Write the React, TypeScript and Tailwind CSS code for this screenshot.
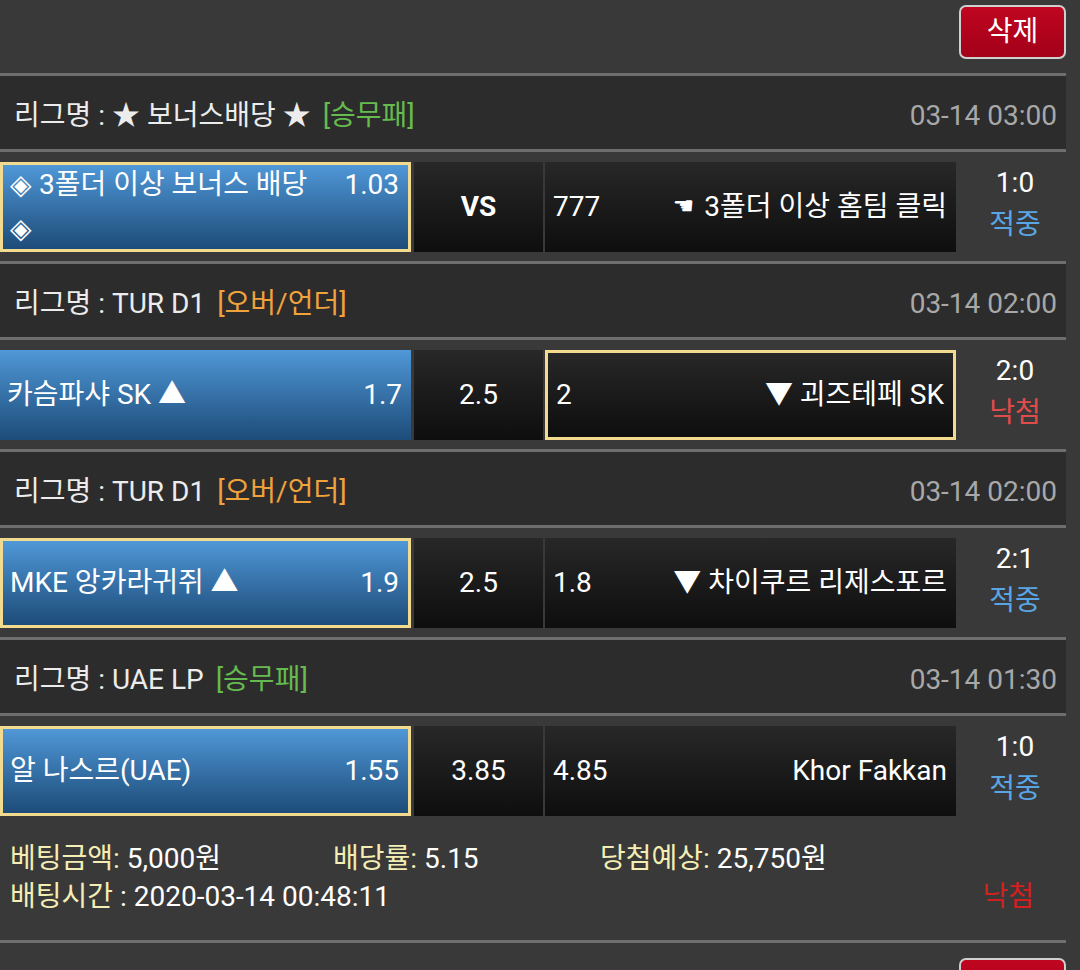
import React from "react";

type Game = {
  league: string
  type: string
  typeColor: string
  time: string
  home: React.ReactNode
  homeOdds: string
  mid: string
  away: React.ReactNode
  awayOdds: string
  pick: 'home' | 'away'
  score: string
  result: string
  resultColor: string
}

const games: Game[] = [
  {
    league: '★ 보너스배당 ★',
    type: '[승무패]',
    typeColor: 'text-[#66bb4e]',
    time: '03-14 03:00',
    home: (<>◈ 3폴더 이상 보너스 배당<br />◈</>),
    homeOdds: '1.03',
    mid: 'VS',
    away: (<><span className="font-['DejaVu_Sans'] text-[24px] align-[2px] mr-[10px]">☚</span>3폴더 이상 홈팀 클릭</>),
    awayOdds: '777',
    pick: 'home',
    score: '1:0',
    result: '적중',
    resultColor: 'text-[#5aa6e4]',
  },
  {
    league: 'TUR D1',
    type: '[오버/언더]',
    typeColor: 'text-[#f0a23c]',
    time: '03-14 02:00',
    home: '카슴파샤 SK ▲',
    homeOdds: '1.7',
    mid: '2.5',
    away: '▼ 괴즈테페 SK',
    awayOdds: '2',
    pick: 'away',
    score: '2:0',
    result: '낙첨',
    resultColor: 'text-[#e04c4c]',
  },
  {
    league: 'TUR D1',
    type: '[오버/언더]',
    typeColor: 'text-[#f0a23c]',
    time: '03-14 02:00',
    home: 'MKE 앙카라귀쥐 ▲',
    homeOdds: '1.9',
    mid: '2.5',
    away: '▼ 차이쿠르 리제스포르',
    awayOdds: '1.8',
    pick: 'home',
    score: '2:1',
    result: '적중',
    resultColor: 'text-[#5aa6e4]',
  },
  {
    league: 'UAE LP',
    type: '[승무패]',
    typeColor: 'text-[#66bb4e]',
    time: '03-14 01:30',
    home: '알 나스르(UAE)',
    homeOdds: '1.55',
    mid: '3.85',
    away: 'Khor Fakkan',
    awayOdds: '4.85',
    pick: 'home',
    score: '1:0',
    result: '적중',
    resultColor: 'text-[#5aa6e4]',
  },
]

const Line = () => <div className="h-[3px] bg-[#6e6e6e]" />

const DeleteButton = () => (
  <button className="w-[107px] h-[54px] rounded-[7px] border-2 border-[#cfcfcf] bg-linear-to-b from-[#c0061f] to-[#a3001a] text-white text-[28px] leading-none">
    삭제
  </button>
)

const GameRow = ({ g }: { g: Game }) => {
  const gold = 'border-[3px] border-[#f2da8e]'
  return (
    <>
      <Line />
      <div className="h-[73px] bg-[#2c2c2c] flex items-center pt-[6px] pl-[14px] pr-[9px]">
        <span className="text-[#ececec]">리그명 : {g.league}</span>
        <span className={`ml-[12px] ${g.typeColor}`}>{g.type}</span>
        <span className="ml-auto text-[#a8a8a8]">{g.time}</span>
      </div>
      <Line />
      <div className="flex pt-[10px] pb-[9px]">
        <div className={`box-border w-[411px] h-[90px] flex items-center pl-[7px] pr-[9px] bg-linear-to-b from-[#5098d8] to-[#1d4c79] text-white leading-[44px] ${g.pick === 'home' ? gold : ''}`}>
          <div className="w-full">
            <span className="float-right">{g.homeOdds}</span>
            {g.home}
          </div>
        </div>
        <div className={`w-[129px] h-[90px] ml-[3px] flex items-center justify-center bg-linear-to-b from-[#282828] to-[#0e0e0e] text-white ${g.mid === 'VS' ? 'font-bold' : ''}`}>
          {g.mid}
        </div>
        <div className={`box-border w-[411px] h-[90px] ml-[2px] flex items-center justify-between pl-[8px] pr-[9px] bg-linear-to-b from-[#282828] to-[#0e0e0e] text-white ${g.pick === 'away' ? gold : ''}`}>
          <span>{g.awayOdds}</span>
          <span>{g.away}</span>
        </div>
        <div className="w-[110px] h-[90px] flex flex-col items-center justify-center leading-[42px] pl-[8px] pb-[6px]">
          <span className="text-white">{g.score}</span>
          <span className={g.resultColor}>{g.result}</span>
        </div>
      </div>
    </>
  )
}

const App: React.FC = () => {
  return (
    <div className="min-h-screen bg-[#393939] font-['Roboto','Noto_Sans_CJK_KR',sans-serif] text-[28px]">
      <div className="w-[1066px]">
        <div className="h-[73px] flex justify-end pt-[5px]">
          <DeleteButton />
        </div>
        {games.map((g, i) => (
          <GameRow key={i} g={g} />
        ))}
        <div className="pt-[15px] pb-[24px] pl-[10px] leading-[38px]">
          <div className="flex">
            <div className="w-[323px]">
              <span className="text-[#f4eeb4]">베팅금액:</span>
              <span className="text-white"> 5,000원</span>
            </div>
            <div className="w-[267px]">
              <span className="text-[#f4eeb4]">배당률:</span>
              <span className="text-white"> 5.15</span>
            </div>
            <div>
              <span className="text-[#f4eeb4]">당첨예상:</span>
              <span className="text-white"> 25,750원</span>
            </div>
          </div>
          <div className="flex">
            <span className="text-[#f4eeb4]">배팅시간</span>
            <span className="text-white">&nbsp;: 2020-03-14 00:48:11</span>
            <span className="ml-auto mr-[32px] text-[#d41f1f]">낙첨</span>
          </div>
        </div>
        <Line />
        <div className="flex justify-end pt-[15px]">
          <DeleteButton />
        </div>
      </div>
    </div>
  )
}

export default App
